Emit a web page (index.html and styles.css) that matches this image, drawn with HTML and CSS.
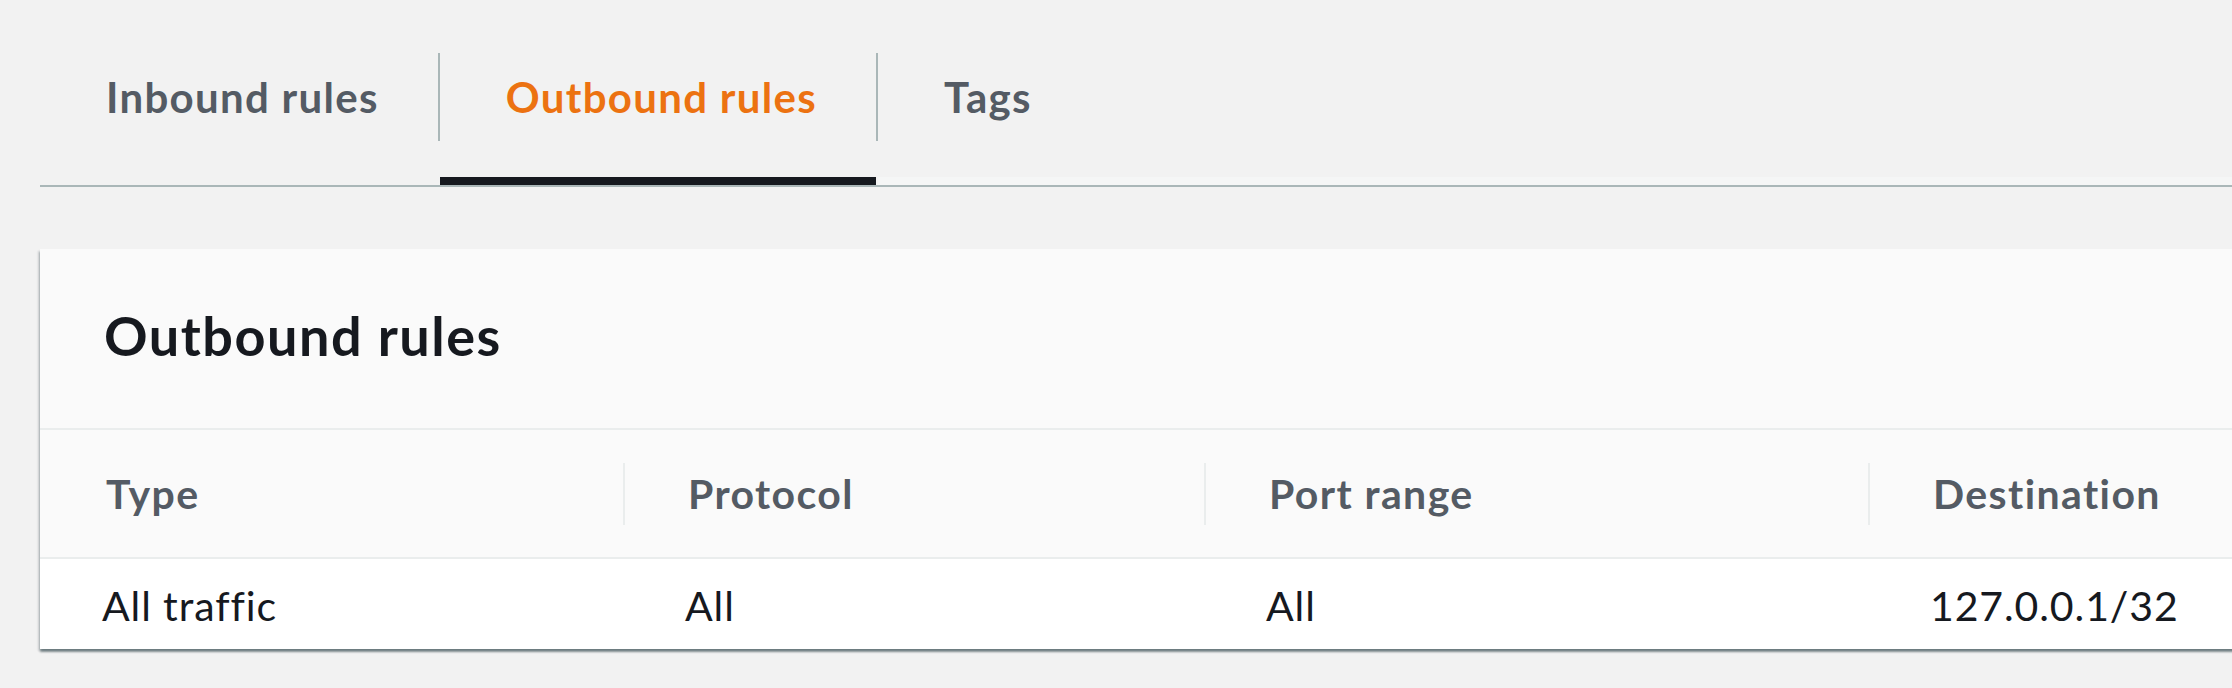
FILE: index.html
```html
<!DOCTYPE html>
<html lang="en">
<head>
<meta charset="utf-8">
<title>Outbound rules</title>
<link rel="stylesheet" href="styles.css">
</head>
<body>
<div class="page">
  <nav class="tabs">
    <div class="tab"><span class="tab-label">Inbound rules</span></div>
    <span class="tab-sep"></span>
    <div class="tab tab-active"><span class="tab-label">Outbound rules</span></div>
    <span class="tab-sep"></span>
    <div class="tab tab-after"><span class="tab-label">Tags</span></div>
    <div class="tab-fill tab-after"></div>
  </nav>

  <section class="card">
    <header class="card-header">
      <h2 class="card-title">Outbound rules</h2>
    </header>
    <div class="table">
      <div class="row row-head">
        <div class="th"><span class="th-text">Type</span></div>
        <div class="th"><span class="th-sep"></span><span class="th-text">Protocol</span></div>
        <div class="th"><span class="th-sep"></span><span class="th-text">Port range</span></div>
        <div class="th"><span class="th-sep"></span><span class="th-text">Destination</span></div>
      </div>
      <div class="row row-data">
        <div class="td">All traffic</div>
        <div class="td">All</div>
        <div class="td">All</div>
        <div class="td">127.0.0.1/32</div>
      </div>
    </div>
  </section>
</div>
</body>
</html>
```

FILE: styles.css
```css
html, body {
  margin: 0;
  padding: 0;
  background: #f2f2f2;
  overflow: hidden;
}

body {
  font-family: "Lato", "Open Sans", "Liberation Sans", sans-serif;
  width: 2232px;
  height: 688px;
}

.page {
  padding-left: 40px;
}

/* Tabs */
.tabs {
  display: flex;
  align-items: flex-start;
  border-bottom: 2px solid #aab7b8;
  padding-top: 53px;
}

.tab {
  display: flex;
  flex-direction: column;
  border-bottom: 8px solid transparent;
  padding-bottom: 36px;
}

.tab-active {
  border-bottom-color: #16191f;
}

.tab-after {
  border-bottom-color: #f5f6f6;
}

.tab-fill {
  flex: 1;
  align-self: stretch;
  border-bottom: 8px solid #f5f6f6;
}

.tab-label {
  display: flex;
  align-items: center;
  height: 88px;
  line-height: 88px;
  padding: 0 59px 0 66px;
  font-size: 42px;
  font-weight: 700;
  letter-spacing: 1.3px;
  color: #545b64;
  white-space: nowrap;
}

.tab-active .tab-label {
  color: #ec7211;
}

.tab-sep {
  width: 2px;
  height: 88px;
  background: #aab7b8;
  flex: none;
}

/* Card */
.card {
  margin-top: 62px;
  margin-right: -40px;
  background: #fafafa;
  box-shadow: 0 3px 2px rgba(0, 28, 36, 0.4),
              2px 2px 2px rgba(0, 28, 36, 0.14),
              -2px 2px 2px rgba(0, 28, 36, 0.14);
}

.card-header {
  height: 181px;
  box-sizing: border-box;
  padding: 55px 0 0 64px;
  border-bottom: 2px solid #eaeded;
}

.card-title {
  margin: 0;
  font-size: 54px;
  line-height: 64px;
  font-weight: 700;
  letter-spacing: 1.5px;
  color: #16191f;
}

.row {
  display: grid;
  grid-template-columns: 583px 581px 664px 1fr;
}

.row-head {
  height: 127px;
  border-bottom: 2px solid #eaeded;
  background: #fafafa;
}

.th {
  display: flex;
  align-items: center;
  padding-left: 66px;
  font-size: 41px;
  font-weight: 700;
  letter-spacing: 1.4px;
  color: #545b64;
  white-space: nowrap;
}

.th + .th {
  padding-left: 0;
}

.th-sep {
  width: 2px;
  height: 62px;
  background: #eaeded;
  margin-right: 63px;
  flex: none;
}

.row-data {
  height: 90px;
  background: #ffffff;
}

.td {
  display: flex;
  align-items: center;
  padding: 3px 0 0 62px;
  font-size: 41px;
  font-weight: 400;
  letter-spacing: 0.9px;
  color: #16191f;
  white-space: nowrap;
}
```
